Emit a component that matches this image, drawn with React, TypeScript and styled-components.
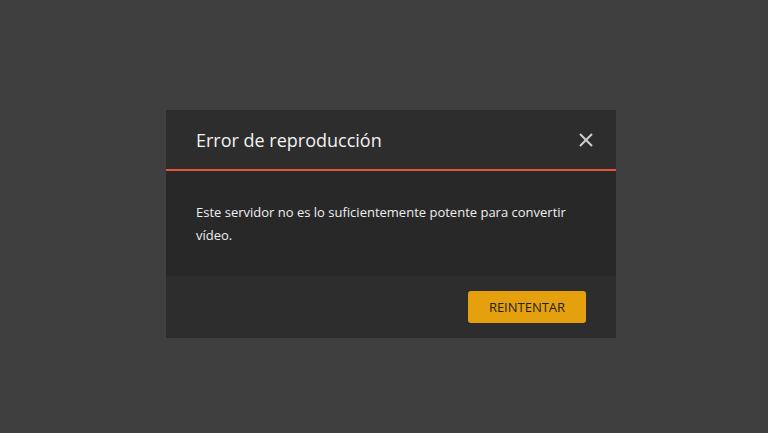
import styled, { createGlobalStyle } from "styled-components";

const GlobalStyle = createGlobalStyle`
    html, body {
        margin: 0;
        padding: 0;
        background: #3f3f3f;
        font-family: "Open Sans", "Noto Sans", sans-serif;
    }
`;

const Page = styled.div`
    width: 100vw;
    height: 100vh;
    box-sizing: border-box;
    padding: 110px 0 0 166px;
`;

const Modal = styled.div`
    width: 450px;
    background: #282828;
    display: flex;
    flex-direction: column;
`;

const Header = styled.header`
    height: 59px;
    display: flex;
    align-items: center;
    justify-content: space-between;
    padding: 0 22px 0 30px;
    background: #2d2d2d;
    border-bottom: 2px solid #e5553a;
`;

const Title = styled.h1`
    margin: 0;
    font-size: 18px;
    font-weight: 400;
    color: #f1f1f1;
`;

const Close = styled.button`
    background: none;
    border: none;
    padding: 0;
    width: 16px;
    height: 16px;
    cursor: pointer;
    display: flex;
    align-items: center;
    justify-content: center;
`;

const Body = styled.div`
    padding: 30px 30px 29px;
    font-size: 13px;
    line-height: 23px;
    color: #eeeeee;
    height: 105px;
    box-sizing: border-box;
`;

const Footer = styled.footer`
    height: 62px;
    background: #2d2d2d;
    display: flex;
    align-items: center;
    justify-content: flex-end;
    padding: 0 30px;
`;

const Button = styled.button`
    width: 118px;
    height: 32px;
    border: none;
    border-radius: 3px;
    background: #e5a00d;
    color: #1f1f1f;
    font-family: inherit;
    font-size: 13px;
    text-transform: uppercase;
    cursor: pointer;
`;

function App() {
    return (
        <>
            <GlobalStyle />
            <Page>
                <Modal>
                    <Header>
                        <Title>Error de reproducción</Title>
                        <Close aria-label="Cerrar">
                            <svg width="14" height="14" viewBox="0 0 14 14">
                                <path d="M1 1L13 13M13 1L1 13" stroke="#cfcfcf" strokeWidth="2" />
                            </svg>
                        </Close>
                    </Header>
                    <Body>
                        Este servidor no es lo suficientemente potente para convertir vídeo.
                    </Body>
                    <Footer>
                        <Button>Reintentar</Button>
                    </Footer>
                </Modal>
            </Page>
        </>
    );
}

export default App;
